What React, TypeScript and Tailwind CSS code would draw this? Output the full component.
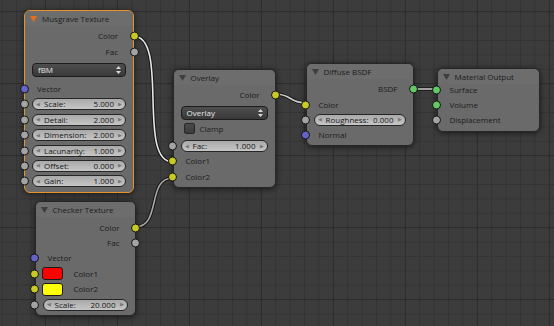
import React from "react";

type SockColor = "yellow" | "gray" | "blue" | "green";

const SOCK: Record<SockColor, string> = {
  yellow: "bg-[#c8c829]",
  gray: "bg-[#a3a3a3]",
  blue: "bg-[#6464c8]",
  green: "bg-[#64c864]",
};

function Socket({ c, side }: { c: SockColor; side: "in" | "out" }) {
  return (
    <span
      className={
        "absolute top-1/2 -translate-y-1/2 w-[9px] h-[9px] rounded-full border border-[#141414] " +
        SOCK[c] +
        (side === "in" ? " left-[-5.5px]" : " right-[-5.5px]")
      }
    />
  );
}

function Row({
  children,
  inp,
  out,
  className = "",
}: {
  children?: React.ReactNode;
  inp?: SockColor;
  out?: SockColor;
  className?: string;
}) {
  return (
    <div className={"relative h-[15.4px] flex items-center " + className}>
      {inp && <Socket c={inp} side="in" />}
      {children}
      {out && <Socket c={out} side="out" />}
    </div>
  );
}

function OutLabel({ text }: { text: string }) {
  return <span className="ml-auto pr-[15px]">{text}</span>;
}

function InLabel({ text }: { text: string }) {
  return <span className="pl-[12px]">{text}</span>;
}

function Field({ label, value }: { label: string; value: string }) {
  return (
    <div className="mx-[7px] flex-1 h-[12px] rounded-full border border-[#262626] bg-gradient-to-b from-[#a9a9a9] to-[#c6c6c6] flex items-center px-[3px] text-[#161616]">
      <span className="text-[5px] text-[#777777]">◀</span>
      <span className="ml-[4px]">{label}</span>
      <span className="ml-auto">{value}</span>
      <span className="ml-[4px] text-[5px] text-[#777777]">▶</span>
    </div>
  );
}

function Dropdown({ text }: { text: string }) {
  return (
    <div className="mx-[7px] flex-1 h-[14px] rounded-[4px] border border-[#1c1c1c] bg-gradient-to-b from-[#4e4e4e] to-[#393939] flex items-center pl-[5px] pr-[4px] text-[#e8e8e8]">
      <span>{text}</span>
      <svg className="ml-auto" width="5" height="8" viewBox="0 0 5 8">
        <polygon points="2.5,0 5,3 0,3" fill="#d8d8d8" />
        <polygon points="0,5 5,5 2.5,8" fill="#d8d8d8" />
      </svg>
    </div>
  );
}

function Header({ title, selected }: { title: string; selected?: boolean }) {
  return (
    <div className="h-[15px] flex items-center pl-[5px] rounded-t-[5px] bg-[#6d6d6d]">
      <svg width="7" height="6" viewBox="0 0 7 6">
        <polygon points="0,0 7,0 3.5,6" fill={selected ? "#e0701c" : "#3e3e3e"} />
      </svg>
      <span className="ml-[5px] text-[#1c1c1c]">{title}</span>
    </div>
  );
}

const nodeBase =
  "absolute rounded-[6px] bg-[#6a6a6a] text-[8px] leading-none text-[#1c1c1c] shadow-[0_1px_6px_rgba(0,0,0,0.6)]";

function Links() {
  const links = [
    { d: "M133,36 C170,36 136,162 173,162", col: "#e6e6e6" },
    { d: "M135,227 C162,227 146,178 173,178", col: "#a8a8a8" },
    { d: "M275,94 C292,94 289,103 306,103", col: "#cfcfcf" },
    { d: "M413,89 C425,89 425,89 437,89", col: "#cfcfcf" },
  ];
  return (
    <svg className="absolute inset-0 pointer-events-none" width="554" height="326">
      {links.map((l, i) => (
        <g key={i} fill="none" strokeLinecap="round">
          <path d={l.d} stroke="#161616" strokeWidth="3.6" />
          <path d={l.d} stroke={l.col} strokeWidth="1.6" />
        </g>
      ))}
    </svg>
  );
}

export default function App() {
  return (
    <div className="relative w-[554px] h-[326px] overflow-hidden bg-[#3c3c3c] bg-[image:linear-gradient(to_right,#2e2e2e_1px,transparent_1px),linear-gradient(to_bottom,#2e2e2e_1px,transparent_1px),linear-gradient(to_right,#343434_1px,transparent_1px),linear-gradient(to_bottom,#343434_1px,transparent_1px)] bg-[size:72px_72px,72px_72px,14.4px_14.4px,14.4px_14.4px] bg-[position:45px_11px,45px_11px,1.8px_11.3px,1.8px_11.3px] font-['Open_Sans','Noto_Sans',sans-serif]">
      <Links />

      {/* Musgrave Texture (selected) */}
      <div className={nodeBase + " left-[24px] top-[10px] w-[110px] h-[183px] border-[1.5px] border-[#e8922c]"}>
        <Header title="Musgrave Texture" selected />
        <div className="pt-[2.5px]">
          <Row out="yellow">
            <OutLabel text="Color" />
          </Row>
          <Row out="gray">
            <OutLabel text="Fac" />
          </Row>
          <div className="pt-[4px] pb-[4px] flex">
            <Dropdown text="fBM" />
          </div>
          <Row inp="blue">
            <InLabel text="Vector" />
          </Row>
          <Row inp="gray">
            <Field label="Scale:" value="5.000" />
          </Row>
          <Row inp="gray">
            <Field label="Detail:" value="2.000" />
          </Row>
          <Row inp="gray">
            <Field label="Dimension:" value="2.000" />
          </Row>
          <Row inp="gray">
            <Field label="Lacunarity:" value="1.000" />
          </Row>
          <Row inp="gray">
            <Field label="Offset:" value="0.000" />
          </Row>
          <Row inp="gray">
            <Field label="Gain:" value="1.000" />
          </Row>
        </div>
      </div>

      {/* Checker Texture */}
      <div className={nodeBase + " left-[34.5px] top-[201px] w-[101px] h-[115px] border border-[#262626]"}>
        <Header title="Checker Texture" />
        <div className="pt-[3px]">
          <Row out="yellow">
            <OutLabel text="Color" />
          </Row>
          <Row out="gray">
            <OutLabel text="Fac" />
          </Row>
          <Row inp="blue">
            <InLabel text="Vector" />
          </Row>
          <Row inp="yellow">
            <span className="ml-[6px] w-[21px] h-[13px] rounded-[3px] border border-[#1a1a1a] bg-[#ff0000]" />
            <span className="ml-[11px]">Color1</span>
          </Row>
          <Row inp="yellow">
            <span className="ml-[6px] w-[21px] h-[13px] rounded-[3px] border border-[#1a1a1a] bg-[#ffff00]" />
            <span className="ml-[11px]">Color2</span>
          </Row>
          <Row inp="gray">
            <Field label="Scale:" value="20.000" />
          </Row>
        </div>
      </div>

      {/* Overlay */}
      <div className={nodeBase + " left-[172.5px] top-[69px] w-[103px] h-[119px] border border-[#262626]"}>
        <Header title="Overlay" />
        <div className="pt-[2.5px]">
          <Row out="yellow">
            <OutLabel text="Color" />
          </Row>
          <div className="pt-[3.5px] flex">
            <Dropdown text="Overlay" />
          </div>
          <div className="h-[17px] flex items-center pl-[10px]">
            <span className="w-[11px] h-[11px] rounded-[2px] border border-[#262626] bg-gradient-to-b from-[#4a4a4a] to-[#3c3c3c]" />
            <span className="ml-[5px]">Clamp</span>
          </div>
          <Row inp="gray" className="mt-[1px]">
            <Field label="Fac:" value="1.000" />
          </Row>
          <Row inp="yellow">
            <InLabel text="Color1" />
          </Row>
          <Row inp="yellow">
            <InLabel text="Color2" />
          </Row>
        </div>
      </div>

      {/* Diffuse BSDF */}
      <div className={nodeBase + " left-[305.5px] top-[63px] w-[108px] h-[83px] border border-[#262626]"}>
        <Header title="Diffuse BSDF" />
        <div className="pt-[2.5px]">
          <Row out="green">
            <OutLabel text="BSDF" />
          </Row>
          <Row inp="yellow">
            <InLabel text="Color" />
          </Row>
          <Row inp="gray">
            <Field label="Roughness:" value="0.000" />
          </Row>
          <Row inp="blue">
            <InLabel text="Normal" />
          </Row>
        </div>
      </div>

      {/* Material Output */}
      <div className={nodeBase + " left-[436.5px] top-[68px] w-[103px] h-[64px] border border-[#262626]"}>
        <Header title="Material Output" />
        <div className="-mt-[2px]">
          <Row inp="green">
            <InLabel text="Surface" />
          </Row>
          <Row inp="green">
            <InLabel text="Volume" />
          </Row>
          <Row inp="gray">
            <InLabel text="Displacement" />
          </Row>
        </div>
      </div>
    </div>
  );
}
